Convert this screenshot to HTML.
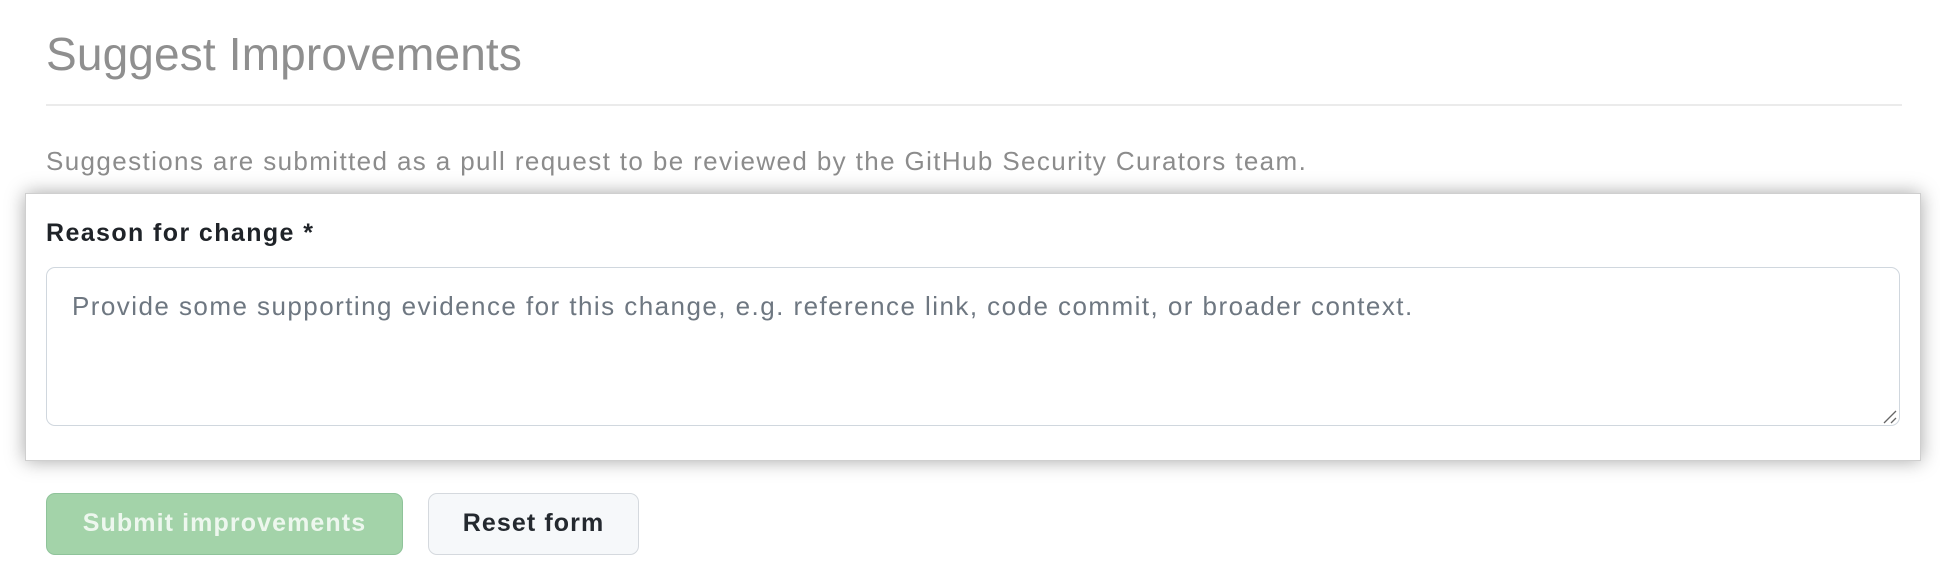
<!DOCTYPE html>
<html><head><meta charset="utf-8"><style>
html,body{margin:0;padding:0;background:#fff;width:1940px;height:582px;overflow:hidden;font-family:"Liberation Sans",sans-serif}
.h{position:absolute;left:46px;top:24px;font-size:46px;letter-spacing:0.15px;color:#8f8f8f;line-height:60px;white-space:nowrap}
.hr{position:absolute;left:46px;top:104px;width:1856px;height:2px;background:#ebebeb}
.sub{position:absolute;left:46px;top:145px;font-size:26px;letter-spacing:1.38px;color:#8c8c8c;line-height:32px;white-space:nowrap}
.box{position:absolute;left:25px;top:193px;width:1894px;height:266px;background:#fff;border:1px solid #cfcfcf;box-shadow:0 0 18px rgba(0,0,0,.35)}
.lbl{position:absolute;left:46px;top:217px;font-size:25px;letter-spacing:1.4px;font-weight:bold;color:#1f2328;line-height:32px;white-space:nowrap}
.ta{position:absolute;left:46px;top:267px;width:1852px;height:157px;border:1.5px solid #d0d7de;border-radius:9px;background:#fff}
.ph{position:absolute;left:72px;top:290px;font-size:26px;letter-spacing:1.45px;color:#6e7781;line-height:32px;white-space:nowrap}
.grip{position:absolute;left:1883px;top:410px}
.b{position:absolute;top:493px;height:62px;box-sizing:border-box;border-radius:9px;font-size:25px;letter-spacing:1.1px;font-weight:bold;line-height:58px;text-align:center;white-space:nowrap}
.s{left:46px;width:357px;background:#a3d3a9;border:1.5px solid #8fc39a;color:#edf7ee}
.r{left:428px;width:211px;background:#f6f8fa;border:1.5px solid #d5d9de;color:#24292f}
</style></head><body>
<div class="h">Suggest Improvements</div>
<div class="hr"></div>
<div class="sub">Suggestions are submitted as a pull request to be reviewed by the GitHub Security Curators team.</div>
<div class="box"></div>
<div class="lbl">Reason for change *</div>
<div class="ta"></div>
<div class="ph">Provide some supporting evidence for this change, e.g. reference link, code commit, or broader context.</div>
<svg class="grip" width="14" height="14" viewBox="0 0 14 14"><path d="M1 13L13 1M8 13L13 8" stroke="#666" stroke-width="1.3"/></svg>
<div class="b s">Submit improvements</div>
<div class="b r">Reset form</div>
</body></html>
